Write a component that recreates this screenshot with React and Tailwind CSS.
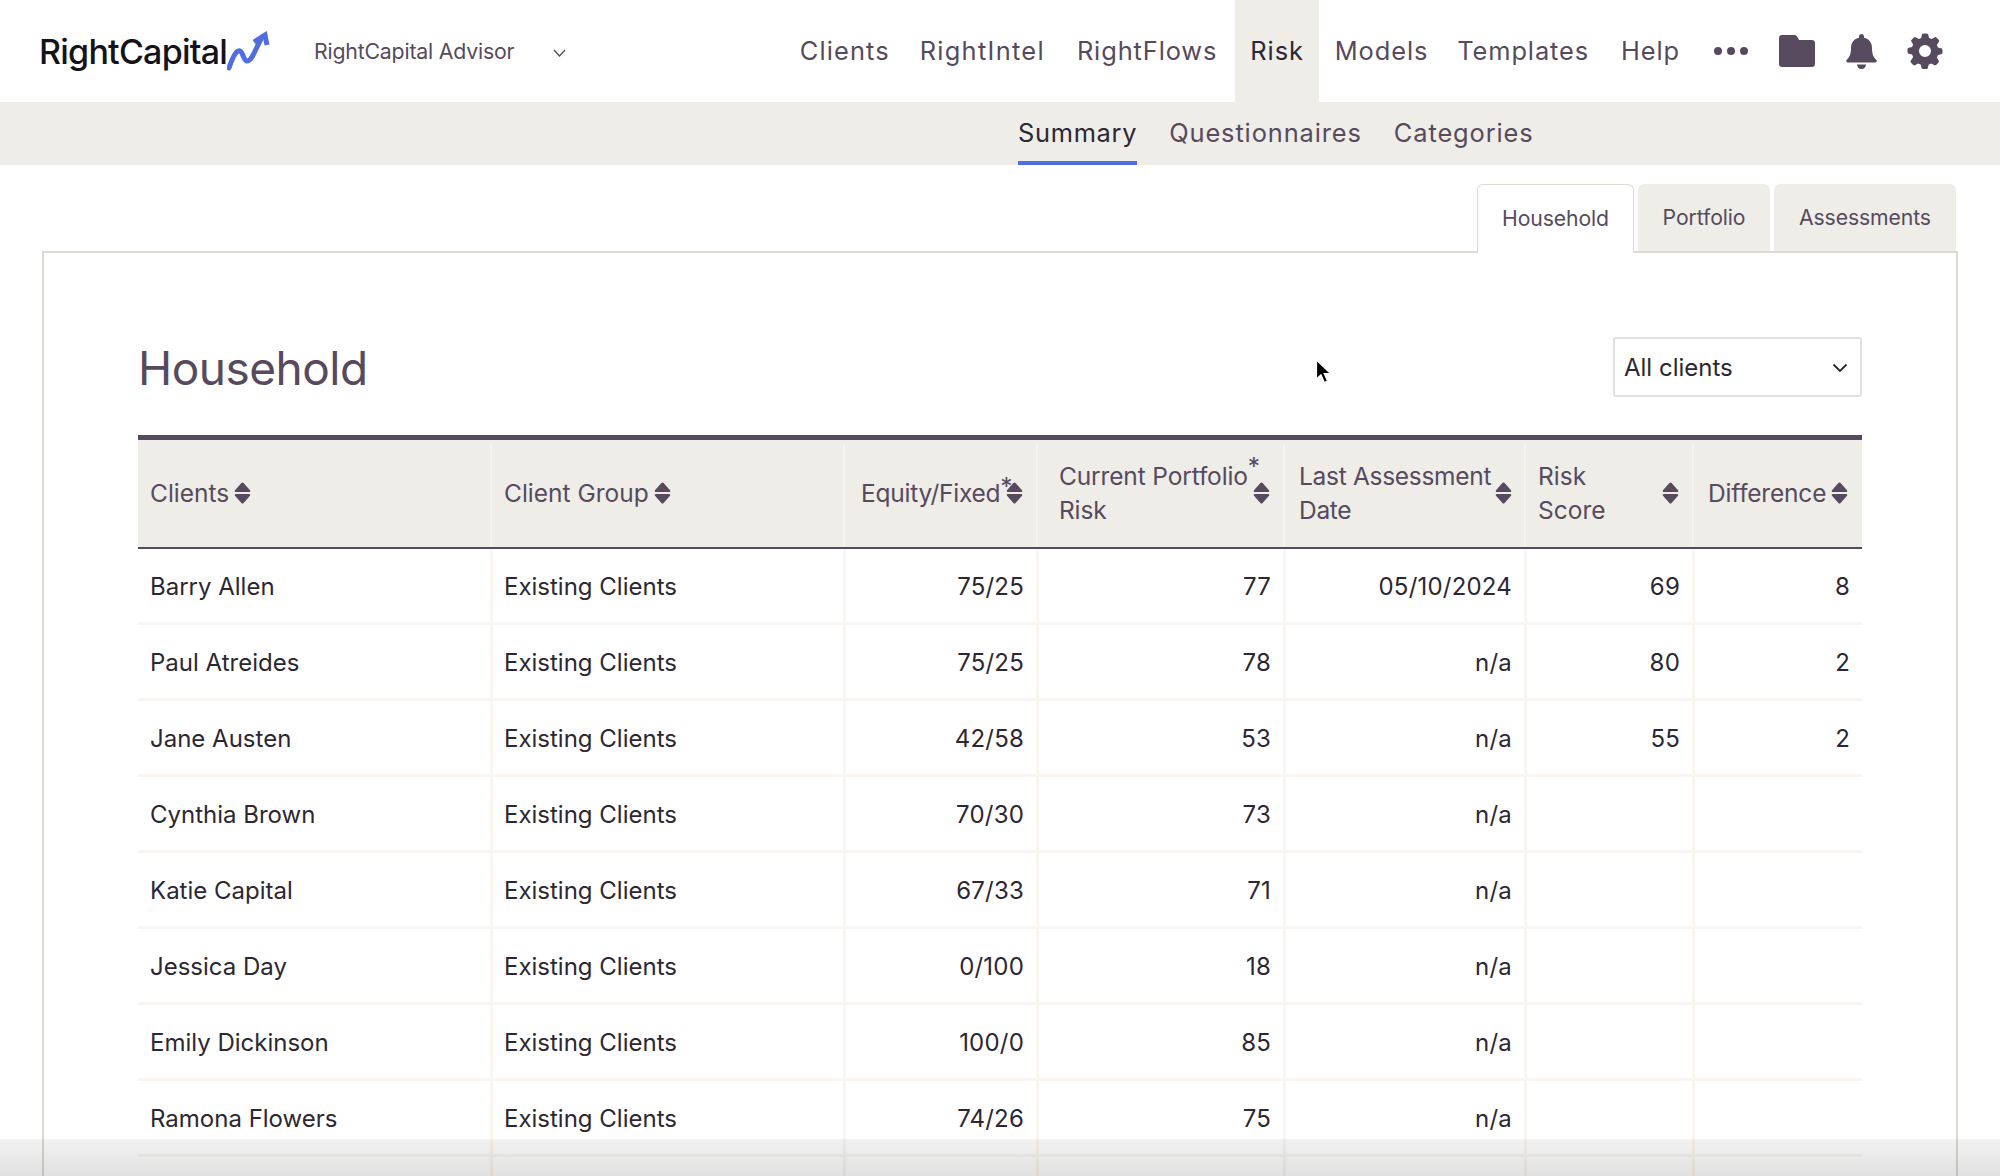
import React from "react";

const FONT = { fontFamily: '"Inter", "Liberation Sans", sans-serif' };

function Sort() {
  return (
    <svg width="17" height="22" viewBox="0 0 17 22" className="shrink-0" fill="#574a5e">
      <path d="M7.4 1 1 8.2C.4 9 .9 10 1.9 10h13.2c1 0 1.5-1 .9-1.8L9.6 1c-.6-.7-1.6-.7-2.2 0Z" />
      <path d="M7.4 21 1 13.8c-.6-.8-.1-1.8.9-1.8h13.2c1 0 1.5 1 .9 1.8L9.6 21c-.6.7-1.6.7-2.2 0Z" />
    </svg>
  );
}

const rows = [
  ["Barry Allen", "75/25", "77", "05/10/2024", "69", "8"],
  ["Paul Atreides", "75/25", "78", "n/a", "80", "2"],
  ["Jane Austen", "42/58", "53", "n/a", "55", "2"],
  ["Cynthia Brown", "70/30", "73", "n/a", "", ""],
  ["Katie Capital", "67/33", "71", "n/a", "", ""],
  ["Jessica Day", "0/100", "18", "n/a", "", ""],
  ["Emily Dickinson", "100/0", "85", "n/a", "", ""],
  ["Ramona Flowers", "74/26", "75", "n/a", "", ""],
  ["", "", "", "", "", ""],
];

const th = "relative p-0 pb-[2px] font-normal text-left border-t-[5px] border-b-2 border-[#574a5e] after:absolute after:left-0 after:top-[4px] after:bottom-0 after:w-[2px] after:bg-[#f6f4f1]";
const td = "h-[76px] pt-[2px] pl-[10px] pr-[12px] border-b-[3px] border-l-[3px] border-[#f8f5f2] text-right tracking-[0.2px]";

export default function App() {
  return (
    <div style={FONT} className="relative w-[2000px] h-[1176px] overflow-hidden bg-white text-[#2d2733]">
      <header className="h-[102px] flex items-center bg-white">
        <div className="ml-[39px] flex items-center w-[275px]">
          <span className="mt-[2px] text-[34px] leading-none font-medium tracking-[-0.75px] text-[#14121a]">RightCapital</span>
          <svg width="44" height="40" viewBox="228 30 44 40" className="-mt-[1px]" fill="none" stroke="#4f6ee0" strokeWidth="5" strokeLinecap="round" strokeLinejoin="round">
            <path d="M230 67c2-6 5-15 9-17 5-2 5 10 9 10 5 0 8-11 14-22" />
            <path d="M255 41 266 34l2 10" strokeLinecap="butt" strokeLinejoin="miter" />
          </svg>
        </div>
        <span className="pt-[1px] text-[21.3px] tracking-[-0.2px] text-[#574a5e]">RightCapital Advisor</span>
        <svg width="13" height="8" viewBox="0 0 13 8" className="ml-[39px] mt-[4px]" fill="none" stroke="#574a5e" strokeWidth="1.3">
          <path d="M1 1l5.500 6L12 1" />
        </svg>
        <nav className="ml-auto mr-[57px] h-full flex items-center text-[25.4px] tracking-[0.9px] text-[#574a5e]">
          <a className="pl-4 pr-[14px] tracking-[1.1px]">Clients</a>
          <a className="px-4 tracking-[1.3px]">RightIntel</a>
          <a className="pl-4 pr-[18px]">RightFlows</a>
          <a className="h-full flex items-center px-[15px] bg-[#eeede8] text-[#2d2733]">Risk</a>
          <a className="pl-4 pr-[13px]">Models</a>
          <a className="px-4">Templates</a>
          <a className="px-4">Help</a>
          <span className="ml-[18px] flex gap-[5px]">
            <i className="block w-[8px] h-[8px] rounded-full bg-[#574a5e]" />
            <i className="block w-[8px] h-[8px] rounded-full bg-[#574a5e]" />
            <i className="block w-[8px] h-[8px] rounded-full bg-[#574a5e]" />
          </span>
          <svg width="36" height="32" viewBox="0 0 36 32" className="ml-[31px]" fill="#574a5e">
            <path d="M3 0h12c1.500 0 2.500.7 3.300 1.700L20 5h13c1.700 0 3 1.300 3 3v21c0 1.700-1.300 3-3 3H3c-1.700 0-3-1.300-3-3V3c0-1.700 1.300-3 3-3Z" />
          </svg>
          <svg width="31" height="35" viewBox="0 0 31 35" className="ml-[31px]" fill="#574a5e">
            <path d="M15.500 0c1.400 0 2.500 1.100 2.500 2.500v1.300c5 .9 8 5 8 10.200 0 7 2 9.500 4.300 12 .9 1 .4 2.500-1 2.500H1.700c-1.400 0-1.900-1.500-1-2.500C3 23.500 5 21 5 14c0-5.200 3-9.300 8-10.200V2.500C13 1.100 14.100 0 15.500 0Z" />
            <path d="M11 30.500h9c0 2.500-2 4.500-4.500 4.500S11 33 11 30.500Z" />
          </svg>
          <svg width="36" height="36" viewBox="0 0 24 24" className="ml-[30px]" fill="#574a5e">
            <path fillRule="evenodd" d="M10 .7c.3-.5 3.700-.5 4 0l.7 2.600c.6.200 1.200.4 1.700.7l2.400-1.300c.5-.200 2.900 2.200 2.700 2.700L19.900 8c.3.500.5 1.100.7 1.700l2.700.7c.5.300.5 3.300 0 3.600l-2.700.7c-.2.600-.4 1.200-.7 1.700l1.400 2.500c.2.500-2.200 2.900-2.700 2.700l-2.400-1.300c-.5.300-1.100.5-1.700.7l-.7 2.700c-.3.500-3.700.5-4 0l-.7-2.700c-.6-.2-1.200-.4-1.700-.7l-2.400 1.300c-.5.200-2.900-2.200-2.700-2.700L4.100 16c-.3-.5-.5-1.100-.7-1.700L.7 13.600c-.5-.3-.5-3.300 0-3.600l2.700-.7c.2-.6.4-1.200.7-1.700L2.700 5.400C2.500 4.900 4.900 2.500 5.400 2.700L7.800 4c.5-.3 1.100-.5 1.700-.7L10 .7ZM12 8a4 4 0 1 0 0 8 4 4 0 0 0 0-8Z" />
          </svg>
        </nav>
      </header>

      <div className="h-[63px] bg-[#eeede8] flex pl-[1018px] text-[25.4px] tracking-[0.9px] text-[#574a5e]">
        <a className="h-full flex items-center pt-[4px] tracking-[0.7px] border-b-[4px] border-[#4f6ee0] text-[#2d2733]">Summary</a>
        <a className="ml-[32px] h-full flex items-center pt-[4px] border-b-[4px] border-transparent">Questionnaires</a>
        <a className="ml-[32px] h-full flex items-center pt-[4px] border-b-[4px] border-transparent">Categories</a>
      </div>

      <div className="h-[19px]" />
      <div className="flex justify-end pr-[44px] gap-[4px] h-[67px] text-[21.2px] tracking-[-0.1px] text-[#574a5e]">
        <div className="relative z-10 w-[157px] h-[69px] flex items-center justify-center bg-white border border-b-0 border-[#dcdad3] rounded-t-[6px]">Household</div>
        <div className="w-[132px] pt-[1px] flex items-center justify-center bg-[#eeede8] rounded-t-[6px]">Portfolio</div>
        <div className="w-[182px] pt-[1px] flex items-center justify-center bg-[#eeede8] rounded-t-[6px]">Assessments</div>
      </div>

      <main className="mx-[42px] h-[925px] border-2 border-b-0 border-[#dcdad3] px-[94px]">
        <div className="h-[182px] flex items-start justify-between">
          <h1 className="mt-[85px] text-[46px] leading-[60px] tracking-[-0.5px] text-[#574a5e]">Household</h1>
          <div className="mt-[84px] w-[249px] h-[60px] pt-[2px] flex items-center justify-between pl-[9px] pr-[12px] border-2 border-[#e3e1dc] rounded-[3px] text-[24px]">
            <span>All clients</span>
            <svg width="16" height="10" viewBox="0 0 16 10" fill="none" stroke="#2d2733" strokeWidth="1.800">
              <path d="M1.500 1.500 8 8l6.500-6.500" />
            </svg>
          </div>
        </div>

        <table className="w-[1724px] table-fixed border-separate border-spacing-0 text-[24px]">
          <colgroup>
            <col className="w-[352px]" />
            <col className="w-[353px]" />
            <col className="w-[193px]" />
            <col className="w-[247px]" />
            <col className="w-[241px]" />
            <col className="w-[168px]" />
            <col className="w-[170px]" />
          </colgroup>
          <thead className="text-[#574a5e] leading-[34px] text-[24.5px]">
            <tr className="bg-[#eeede8]">
              <th className="h-[114px] p-0 pb-[2px] font-normal text-left border-t-[5px] border-b-2 border-[#574a5e] pl-[12px]">
                <span className="flex items-center gap-[5px]">Clients <Sort /></span>
              </th>
              <th className={`${th} pl-[14px]`}>
                <span className="flex items-center gap-[5px]">Client Group <Sort /></span>
              </th>
              <th className={`${th} pl-[18px] pr-[13px]`}>
                <span className="flex items-center justify-between tracking-[-0.25px]">
                  <span className="whitespace-nowrap">Equity/Fixed<span className="absolute -mt-[7px]">*</span></span>
                  <Sort />
                </span>
              </th>
              <th className={`${th} pl-[23px] pr-[13px]`}>
                <span className="flex items-center justify-between tracking-[-0.15px]">
                  <span className="whitespace-nowrap">Current Portfolio<span className="absolute -mt-[10px]">*</span><br />Risk</span>
                  <Sort />
                </span>
              </th>
              <th className={`${th} pl-[16px] pr-[12px]`}>
                <span className="flex items-center justify-between tracking-[-0.3px]">
                  <span className="whitespace-nowrap">Last Assessment<br />Date</span>
                  <Sort />
                </span>
              </th>
              <th className={`${th} pl-[14px] pr-[13px]`}>
                <span className="flex items-center justify-between">
                  <span>Risk<br />Score</span>
                  <Sort />
                </span>
              </th>
              <th className={`${th} pl-[16px] pr-[14px]`}>
                <span className="flex items-center justify-between tracking-[-0.2px]">
                  <span>Difference</span>
                  <Sort />
                </span>
              </th>
            </tr>
          </thead>
          <tbody>
            {rows.map((r, i) => (
              <tr key={i}>
                <td className="h-[76px] pt-[2px] pl-[12px] border-b-[3px] border-[#f8f5f2] text-left">{r[0]}</td>
                <td className={`${td} !pl-[11px] !text-left !tracking-normal`}>{r[0] ? "Existing Clients" : ""}</td>
                <td className={td}>{r[1]}</td>
                <td className={td}>{r[2]}</td>
                <td className={td}>{r[3]}</td>
                <td className={td}>{r[4]}</td>
                <td className={td}>{r[5]}</td>
              </tr>
            ))}
          </tbody>
        </table>
      </main>

      <svg width="18" height="26" viewBox="0 0 18 26" className="absolute left-[1315px] top-[359px]">
        <path d="M1.500 1v19l4.500-4.300 3.300 7.800 3.200-1.400-3.300-7.500h6.300Z" fill="#000" stroke="#fff" strokeWidth="1.200" />
      </svg>

      <div className="absolute left-0 right-0 bottom-0 h-[37px] bg-linear-to-b from-black/5 to-black/12 pointer-events-none" />
    </div>
  );
}
